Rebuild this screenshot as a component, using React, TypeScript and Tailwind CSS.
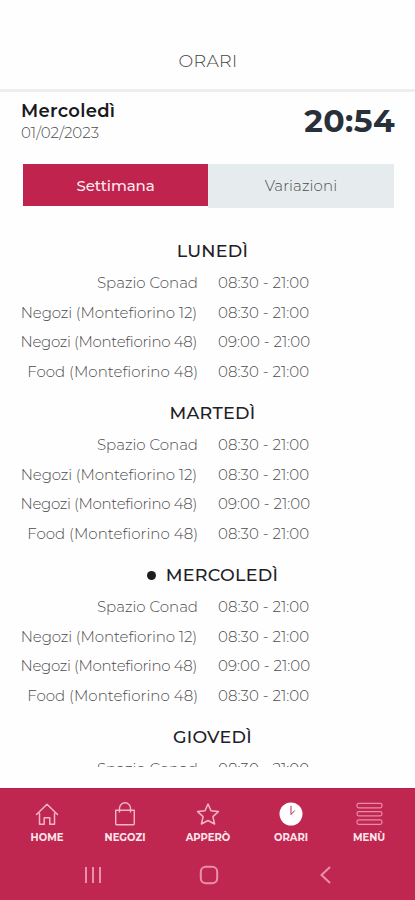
import React from 'react';
import clsx from 'clsx';

interface Slot {
  place: string;
  hours: string;
  nameClass: string;
}

interface DayProps {
  name: string;
  slots: Slot[];
  current?: boolean;
}

const weekSlots: Slot[] = [
  { place: 'Spazio Conad', hours: '08:30 - 21:00', nameClass: '' },
  { place: 'Negozi (Montefiorino 12)', hours: '08:30 - 21:00', nameClass: 'tracking-[-0.1px] pr-px' },
  { place: 'Negozi (Montefiorino 48)', hours: '09:00 - 21:00', nameClass: 'tracking-[-0.33px] pr-px' },
  { place: 'Food (Montefiorino 48)', hours: '08:30 - 21:00', nameClass: 'tracking-[0.02px]' },
];

const days: DayProps[] = [
  { name: 'LUNEDÌ', slots: weekSlots },
  { name: 'MARTEDÌ', slots: weekSlots },
  { name: 'MERCOLEDÌ', slots: weekSlots, current: true },
  { name: 'GIOVEDÌ', slots: weekSlots.slice(0, 1) },
];

const Day: React.FC<DayProps> = ({ name, slots, current }) => (
  <section>
    <h2 className="flex h-11 items-center justify-center pt-2.5 pl-[10px] text-[17.5px] font-medium tracking-[0.3px] text-[#1d2026]">
      {current && <span className="mr-[10px] size-[9px] rounded-full bg-[#1d1d20]" />}
      <span>{name}</span>
    </h2>
    {slots.map((slot) => (
      <div key={slot.place} className="flex h-[29.5px] items-center text-[15px] font-light text-[#4c4c4c]">
        <div className={clsx('w-[198px] text-right whitespace-nowrap', slot.nameClass)}>{slot.place}</div>
        <div className="pl-5 whitespace-nowrap tracking-[0.05px]">{slot.hours}</div>
      </div>
    ))}
  </section>
);

const HomeIcon = () => (
  <svg viewBox="0 0 24 24" className="size-6" fill="none" stroke="#f4b5c5" strokeWidth="1.5" strokeLinejoin="round" strokeLinecap="round">
    <path d="M1.5 12.5 12 2.3l10.500 10.200M4.500 11.500v10.800h4.700v-6.500h5.600v6.500h4.700V11.500" />
  </svg>
);

const BagIcon = () => (
  <svg viewBox="0 0 24 24" className="size-6" fill="none" stroke="#f4b5c5" strokeWidth="1.4" strokeLinejoin="round">
    <path d="M2.700 8.300h18.600v13.400a1 1 0 0 1-1 1H3.700a1 1 0 0 1-1-1zM6.500 10.500V6.300a5.500 5.500 0 0 1 11 0v4.200" />
  </svg>
);

const StarIcon = () => (
  <svg viewBox="0 0 24 24" className="size-6" fill="none" stroke="#f4b5c5" strokeWidth="1.5" strokeLinejoin="round">
    <path d="m12 2 3 6.700 7.400.900-5.500 5 1.700 7.400L12 18.500 5.400 22l1.700-7.400-5.500-5L9 8.700z" />
  </svg>
);

const ClockIcon = () => (
  <svg viewBox="0 0 24 24" className="size-6">
    <circle cx="12" cy="12" r="11.5" fill="#fff" />
    <path d="M12 3.800v8.700l3.800-4" fill="none" stroke="#bd2850" strokeWidth="1" />
  </svg>
);

const MenuIcon = () => (
  <svg viewBox="0 0 27 24" className="h-6 w-[27px]" fill="none" stroke="#e98ca5" strokeWidth="1.2">
    <rect x="1" y="1.3" width="25" height="4.6" rx="1.8" />
    <rect x="1" y="9.7" width="25" height="4.2" rx="1.8" />
    <rect x="1" y="17.8" width="25" height="4.6" rx="1.8" />
  </svg>
);

const navItems = [
  { label: 'HOME', icon: <HomeIcon />, width: 'w-[78px]' },
  { label: 'NEGOZI', icon: <BagIcon />, width: 'w-[78px]' },
  { label: 'APPERÒ', icon: <StarIcon />, width: 'w-[88px]' },
  { label: 'ORARI', icon: <ClockIcon />, width: 'w-[78px]' },
  { label: 'MENÙ', icon: <MenuIcon />, width: 'w-[78px]' },
];

export default function App() {
  return (
    <div className="flex h-[900px] w-[415px] flex-col overflow-hidden bg-[#fefefe] font-['Montserrat','Inter',sans-serif]">
      <header className="flex h-[92px] shrink-0 items-end justify-center border-b-[3px] border-[#eeeeee] pb-4">
        <h1 className="pl-px text-[17.5px] leading-[25px] font-light tracking-[0.3px] text-[#444]">ORARI</h1>
      </header>

      <div className="flex h-[72px] shrink-0 justify-between pr-5 pl-[21px]">
        <div className="pt-2">
          <p className="text-[18px] leading-[22px] font-semibold tracking-[0.3px] text-[#17191d]">Mercoledì</p>
          <p className="text-[15px] leading-[22px] font-light text-[#4c4c4c]">01/02/2023</p>
        </div>
        <p className="pt-[9px] text-[31.5px] leading-10 font-bold tracking-[0.4px] text-[#283039]">20:54</p>
      </div>

      <div className="flex h-11 shrink-0 items-start pr-[21px] pl-[23px] text-[15px]">
        <button className="h-[42px] w-[185px] bg-[#c0234e] pt-0.5 font-medium tracking-[-0.1px] text-[#fce9ee]">
          Settimana
        </button>
        <button className="h-[44px] flex-1 bg-[#e6ebee] font-light tracking-[0.1px] text-[#4c4c4c]">Variazioni</button>
      </div>

      <main className="h-[559px] shrink-0 overflow-hidden pt-[16.500px]">
        {days.map((day) => (
          <Day key={day.name} {...day} />
        ))}
      </main>

      <footer className="mt-[21px] h-[112px] border-t border-[#b51f48] bg-[#bf2751]">
        <nav className="flex justify-center pt-[13px] pl-px">
          {navItems.map((item) => (
            <div key={item.label} className={clsx('flex flex-col items-center', item.width)}>
              {item.icon}
              <span className="pt-[5px] text-[10px] leading-[14px] font-bold text-[#fde6ec]">{item.label}</span>
            </div>
          ))}
        </nav>
        <div className="flex items-center justify-between pt-[20px] pr-[81px] pl-[84px]">
          <svg viewBox="0 0 18 20" className="h-5 w-[18px]" stroke="#e991aa" strokeWidth="2">
            <path d="M2 2v16M9 2v16M16 2v16" />
          </svg>
          <svg viewBox="0 0 20 20" className="size-5" fill="none" stroke="#e991aa" strokeWidth="2">
            <rect x="1.8" y="1.8" width="16.4" height="16.4" rx="5" />
          </svg>
          <svg viewBox="0 0 18 20" className="h-5 w-[18px]" fill="none" stroke="#e991aa" strokeWidth="2">
            <path d="m14 2-8.500 8 8.500 8" />
          </svg>
        </div>
      </footer>
    </div>
  );
}
